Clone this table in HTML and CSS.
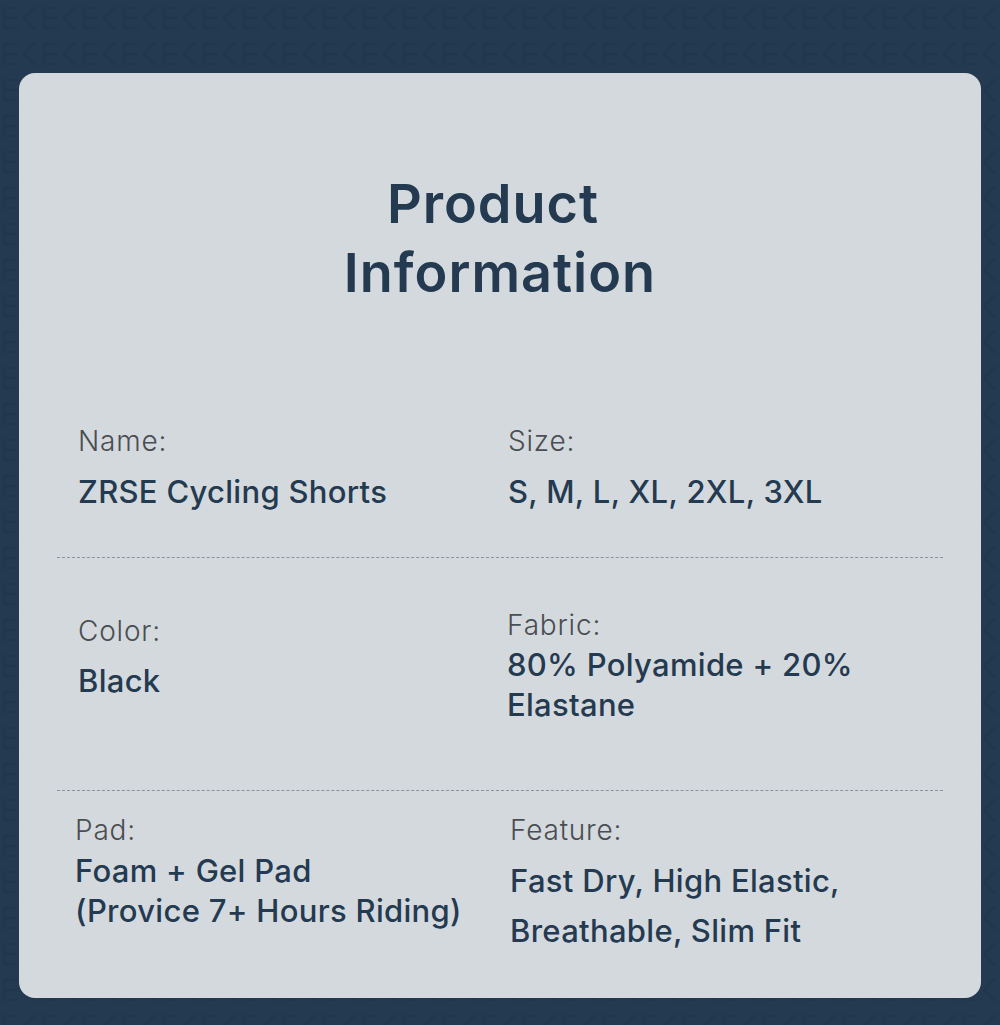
FILE: index.html
```html
<!DOCTYPE html>
<html lang="en">
<head>
    <meta charset="UTF-8">
    <meta name="viewport" content="width=device-width, initial-scale=1.0">
    <title>Product Information</title>
    <link rel="stylesheet" href="styles.css">
</head>
<body>
    <div class="card">
        <h1 class="title"><span class="title-first">Product</span><br>Information</h1>
        <div class="specs">
            <div class="row row-1">
                <div class="item">
                    <div class="label">Name:</div>
                    <div class="value">ZRSE Cycling Shorts</div>
                </div>
                <div class="item">
                    <div class="label">Size:</div>
                    <div class="value">S, M, L, XL, 2XL, 3XL</div>
                </div>
            </div>
            <div class="row row-2">
                <div class="item item-color">
                    <div class="label">Color:</div>
                    <div class="value">Black</div>
                </div>
                <div class="item item-fabric">
                    <div class="label">Fabric:</div>
                    <div class="value">80% Polyamide + 20%<br>Elastane</div>
                </div>
            </div>
            <div class="row row-3">
                <div class="item item-pad">
                    <div class="label">Pad:</div>
                    <div class="value">Foam + Gel Pad<br>(Provice 7+ Hours Riding)</div>
                </div>
                <div class="item item-feature">
                    <div class="label">Feature:</div>
                    <div class="value">Fast Dry, High Elastic,<br>Breathable, Slim Fit</div>
                </div>
            </div>
        </div>
    </div>
</body>
</html>
```

FILE: styles.css
```css
body {
    margin: 0;
    background-color: #233a51;
    background-image: url("data:image/svg+xml,%3Csvg xmlns='http://www.w3.org/2000/svg' width='40' height='36'%3E%3Cg fill='none' stroke='%231d3146' stroke-width='2.5' opacity='0.45'%3E%3Cpath d='M4 8h14M4 18h14M4 28h14M4 8v20'/%3E%3Cpath d='M36 6l-12 12 12 12'/%3E%3C/g%3E%3C/svg%3E");
    font-family: Inter, "Noto Sans", sans-serif;
    min-height: 1025px;
    padding-top: 73px;
    box-sizing: border-box;
}

.card {
    background-color: #d4d9dd;
    margin: 0 19px;
    height: 925px;
    border-radius: 16px;
    padding: 0 38px;
    box-sizing: border-box;
    overflow: hidden;
}

.title {
    margin: 0;
    padding-top: 96px;
    text-align: center;
    font-size: 54px;
    line-height: 69px;
    font-weight: 600;
    letter-spacing: 1px;
    color: #243a50;
}

.title-first {
    margin-right: 14px;
}

.specs {
    margin-top: 99px;
}

.row {
    display: grid;
    grid-template-columns: 451px 1fr;
    border-bottom: 1px dashed #8a939c;
    box-sizing: border-box;
}

.row-1 {
    height: 152px;
    padding-top: 17px;
}

.row-2 {
    height: 233px;
    padding-top: 49px;
}

.row-3 {
    border-bottom: none;
    padding-top: 21px;
}

.item {
    padding-left: 21px;
}

.item + .item {
    padding-left: 0;
}

.label {
    font-size: 28px;
    line-height: 36px;
    font-weight: 300;
    letter-spacing: 0.8px;
    color: #4a4d52;
    margin-bottom: 13px;
}

.value {
    font-size: 31px;
    line-height: 40px;
    font-weight: 500;
    letter-spacing: 0.3px;
    color: #243a50;
}

.item-color {
    padding-top: 6px;
}

.item-color .label {
    margin-bottom: 12px;
}

.item-fabric .label {
    margin-bottom: 2px;
}

.item + .item-fabric {
    padding-left: 0;
    margin-left: -1px;
}

.item-pad {
    padding-left: 18px;
}

.item-pad .label {
    margin-bottom: 3px;
}

.item + .item-feature {
    padding-left: 2px;
}

.item-feature .label {
    margin-bottom: 8px;
}

.item-feature .value {
    line-height: 50px;
}
```
